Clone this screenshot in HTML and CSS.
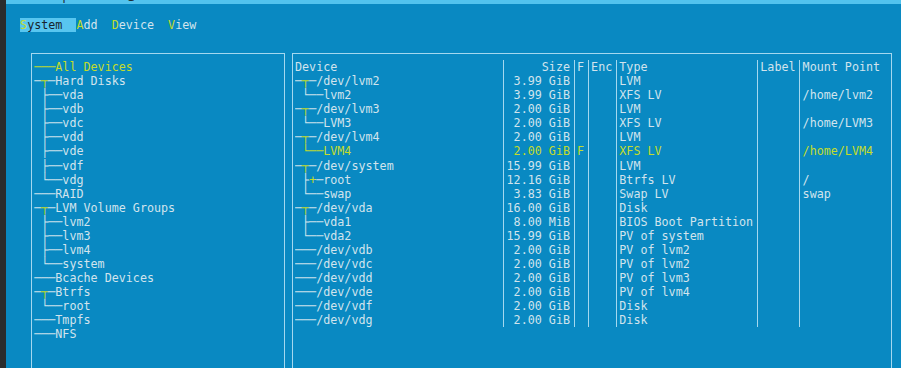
FILE: index.html
```html
<!DOCTYPE html>
<html>
<head>
  <title>partitioner</title>
  <link rel="stylesheet" href="styles.css">
</head>
<body>
  <div class="edge"></div>
  <div class="window">
    <div class="titlebar"><span>Tools — partitioner @ localhost</span></div>
    <div class="terminal">
      <div class="menubar">
        <span class="menu-item active"><span class="key">S</span>ystem</span>
        <span class="menu-item"><span class="key">A</span>dd</span>
        <span class="menu-item"><span class="key">D</span>evice</span>
        <span class="menu-item"><span class="key">V</span>iew</span>
      </div>

      <div class="panels">
        <div class="panel tree-panel">
          <div class="line sel">───All Devices</div>
          <div class="line">─<span class="tee">┬</span>─Hard Disks</div>
          <div class="line"> ├──vda</div>
          <div class="line"> ├──vdb</div>
          <div class="line"> ├──vdc</div>
          <div class="line"> ├──vdd</div>
          <div class="line"> ├──vde</div>
          <div class="line"> ├──vdf</div>
          <div class="line"> └──vdg</div>
          <div class="line">───RAID</div>
          <div class="line">─<span class="tee">┬</span>─LVM Volume Groups</div>
          <div class="line"> ├──lvm2</div>
          <div class="line"> ├──lvm3</div>
          <div class="line"> ├──lvm4</div>
          <div class="line"> └──system</div>
          <div class="line">───Bcache Devices</div>
          <div class="line">─<span class="tee">┬</span>─Btrfs</div>
          <div class="line"> └──root</div>
          <div class="line">───Tmpfs</div>
          <div class="line">───NFS</div>
        </div>

        <div class="panel device-panel">
          <div class="row">
            <span class="c dev">Device</span><span class="c size">Size</span><span class="c f">F</span><span class="c enc">Enc</span><span class="c type">Type</span><span class="c label">Label</span><span class="c mount">Mount Point</span>
          </div>
          <div class="row">
            <span class="c dev">─<span class="tee">┬</span>─/dev/lvm2</span><span class="c size">3.99 GiB</span><span class="c f"></span><span class="c enc"></span><span class="c type">LVM</span><span class="c label"></span><span class="c mount"></span>
          </div>
          <div class="row">
            <span class="c dev"> └──lvm2</span><span class="c size">3.99 GiB</span><span class="c f"></span><span class="c enc"></span><span class="c type">XFS LV</span><span class="c label"></span><span class="c mount">/home/lvm2</span>
          </div>
          <div class="row">
            <span class="c dev">─<span class="tee">┬</span>─/dev/lvm3</span><span class="c size">2.00 GiB</span><span class="c f"></span><span class="c enc"></span><span class="c type">LVM</span><span class="c label"></span><span class="c mount"></span>
          </div>
          <div class="row">
            <span class="c dev"> └──LVM3</span><span class="c size">2.00 GiB</span><span class="c f"></span><span class="c enc"></span><span class="c type">XFS LV</span><span class="c label"></span><span class="c mount">/home/LVM3</span>
          </div>
          <div class="row">
            <span class="c dev">─<span class="tee">┬</span>─/dev/lvm4</span><span class="c size">2.00 GiB</span><span class="c f"></span><span class="c enc"></span><span class="c type">LVM</span><span class="c label"></span><span class="c mount"></span>
          </div>
          <div class="row sel">
            <span class="c dev"> └──LVM4</span><span class="c size">2.00 GiB</span><span class="c f">F</span><span class="c enc"></span><span class="c type">XFS LV</span><span class="c label"></span><span class="c mount">/home/LVM4</span>
          </div>
          <div class="row">
            <span class="c dev">─<span class="tee">┬</span>─/dev/system</span><span class="c size">15.99 GiB</span><span class="c f"></span><span class="c enc"></span><span class="c type">LVM</span><span class="c label"></span><span class="c mount"></span>
          </div>
          <div class="row">
            <span class="c dev"> ├<span class="tee">+</span>─root</span><span class="c size">12.16 GiB</span><span class="c f"></span><span class="c enc"></span><span class="c type">Btrfs LV</span><span class="c label"></span><span class="c mount">/</span>
          </div>
          <div class="row">
            <span class="c dev"> └──swap</span><span class="c size">3.83 GiB</span><span class="c f"></span><span class="c enc"></span><span class="c type">Swap LV</span><span class="c label"></span><span class="c mount">swap</span>
          </div>
          <div class="row">
            <span class="c dev">─<span class="tee">┬</span>─/dev/vda</span><span class="c size">16.00 GiB</span><span class="c f"></span><span class="c enc"></span><span class="c type">Disk</span><span class="c label"></span><span class="c mount"></span>
          </div>
          <div class="row">
            <span class="c dev"> ├──vda1</span><span class="c size">8.00 MiB</span><span class="c f"></span><span class="c enc"></span><span class="c type">BIOS Boot Partition</span><span class="c label"></span><span class="c mount"></span>
          </div>
          <div class="row">
            <span class="c dev"> └──vda2</span><span class="c size">15.99 GiB</span><span class="c f"></span><span class="c enc"></span><span class="c type">PV of system</span><span class="c label"></span><span class="c mount"></span>
          </div>
          <div class="row">
            <span class="c dev">───/dev/vdb</span><span class="c size">2.00 GiB</span><span class="c f"></span><span class="c enc"></span><span class="c type">PV of lvm2</span><span class="c label"></span><span class="c mount"></span>
          </div>
          <div class="row">
            <span class="c dev">───/dev/vdc</span><span class="c size">2.00 GiB</span><span class="c f"></span><span class="c enc"></span><span class="c type">PV of lvm2</span><span class="c label"></span><span class="c mount"></span>
          </div>
          <div class="row">
            <span class="c dev">───/dev/vdd</span><span class="c size">2.00 GiB</span><span class="c f"></span><span class="c enc"></span><span class="c type">PV of lvm3</span><span class="c label"></span><span class="c mount"></span>
          </div>
          <div class="row">
            <span class="c dev">───/dev/vde</span><span class="c size">2.00 GiB</span><span class="c f"></span><span class="c enc"></span><span class="c type">PV of lvm4</span><span class="c label"></span><span class="c mount"></span>
          </div>
          <div class="row">
            <span class="c dev">───/dev/vdf</span><span class="c size">2.00 GiB</span><span class="c f"></span><span class="c enc"></span><span class="c type">Disk</span><span class="c label"></span><span class="c mount"></span>
          </div>
          <div class="row">
            <span class="c dev">───/dev/vdg</span><span class="c size">2.00 GiB</span><span class="c f"></span><span class="c enc"></span><span class="c type">Disk</span><span class="c label"></span><span class="c mount"></span>
          </div>
        </div>
      </div>
    </div>
  </div>
</body>
</html>
```

FILE: styles.css
```css
:root {
  --cw: 7.05px;
  --rh: 14.05px;
  --line: #a4d8ef;
  --green: #c4dc2a;
}

html,
body {
  height: 100%;
}

body {
  display: flex;
  margin: 0;
  overflow: hidden;
  background-color: #0989c2;
  color: #d2e4ed;
  font-family: "DejaVu Sans Mono", monospace;
  font-size: 11.71px;
  line-height: var(--rh);
}

.edge {
  flex: none;
  width: 6px;
  background-color: #2a2c2d;
}

.window {
  flex: 1;
  display: flex;
  flex-direction: column;
  min-width: 0;
}

.titlebar {
  flex: none;
  height: 4px;
  overflow: hidden;
  background-color: #52c3ee;
  color: #1b2a33;
  font-family: "Noto Sans", sans-serif;
  font-size: 12px;
}

.titlebar span {
  display: block;
  margin-top: -12px;
  padding-left: 9px;
  line-height: 16px;
  white-space: nowrap;
}

.terminal {
  flex: none;
  padding-top: var(--rh);
}

/* menu bar */
.menubar {
  display: flex;
  height: var(--rh);
  padding-left: calc(2 * var(--cw));
}

.menu-item {
  margin-right: calc(2 * var(--cw));
  white-space: pre;
}

.menu-item.active {
  margin-right: 0;
  padding-right: calc(2 * var(--cw));
  background-color: #58c6f0;
  color: #17242c;
}

.key {
  color: var(--green);
}

/* panels */
.panels {
  display: flex;
  gap: calc(var(--cw) - 1px);
  margin-top: calc(1.5 * var(--rh));
  margin-left: calc(3.5 * var(--cw));
}

.panel {
  box-sizing: border-box;
  height: 320px;
  border: 1px solid var(--line);
  border-bottom: none;
  padding-top: calc(var(--rh) / 2 - 1px);
  padding-left: calc(var(--cw) / 2 - 1px);
}

.tree-panel {
  width: calc(36 * var(--cw) + 1px);
}

.device-panel {
  width: calc(85 * var(--cw) + 1px);
}

.line {
  height: var(--rh);
  white-space: pre;
}

.tee {
  color: var(--green);
}

.sel,
.sel .c {
  color: var(--green);
}

/* device table */
.row {
  display: flex;
  height: var(--rh);
}

.c {
  box-sizing: border-box;
  flex: none;
  height: var(--rh);
  overflow: hidden;
  white-space: pre;
}

.c + .c {
  border-left: 1px solid var(--line);
  padding-left: calc(var(--cw) / 2 - 1px);
}

.dev {
  width: calc(29.5 * var(--cw));
}

.size {
  width: calc(10 * var(--cw));
  padding-right: calc(var(--cw) / 2);
  text-align: right;
}

.f {
  width: calc(2 * var(--cw));
}

.enc {
  width: calc(4 * var(--cw));
}

.type {
  width: calc(20 * var(--cw));
}

.label {
  width: calc(6 * var(--cw));
}

.mount {
  flex: 1;
}
```
